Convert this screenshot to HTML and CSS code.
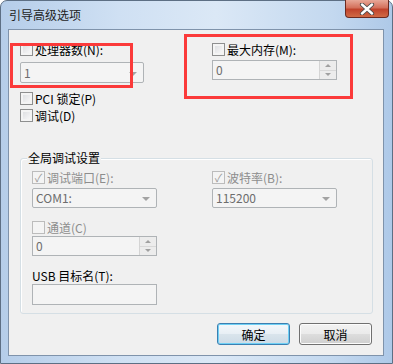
FILE: index.html
```html
<!DOCTYPE html>
<html lang="zh-CN">
<head>
    <meta charset="UTF-8">
    <title>引导高级选项</title>
    <link rel="stylesheet" href="styles.css">
</head>
<body>
    <div class="window">
        <div class="titlebar">
            <span class="title">引导高级选项</span>
            <span class="close">
                <svg width="18" height="12" viewBox="0 0 18 12">
                    <path d="M4 1.5 L14 10.5 M14 1.5 L4 10.5" stroke="#4a4a4a" stroke-width="4.2" stroke-linecap="round"/>
                    <path d="M4 1.5 L14 10.5 M14 1.5 L4 10.5" stroke="#ffffff" stroke-width="2.4" stroke-linecap="round"/>
                </svg>
            </span>
        </div>

        <div class="client">
            <div class="top">
                <div class="col">
                    <div class="check"><span class="box"></span><span>处理器数(N):</span></div>
                    <div class="combo combo-cpu"><span>1</span><span class="arrow"></span></div>
                    <div class="check check-pci"><span class="box"></span><span>PCI 锁定(P)</span></div>
                    <div class="check check-debug"><span class="box"></span><span>调试(D)</span></div>
                </div>
                <div class="col">
                    <div class="check"><span class="box"></span><span>最大内存(M):</span></div>
                    <div class="spin spin-mem">
                        <span class="spin-value">0</span>
                        <span class="spin-btns"><span class="up"></span><span class="down"></span></span>
                    </div>
                </div>
            </div>

            <div class="group">
                <div class="group-title">全局调试设置</div>
                <div class="group-body">
                    <div class="col">
                        <div class="check disabled"><span class="box checked">✓</span><span>调试端口(E):</span></div>
                        <div class="combo combo-port"><span>COM1:</span><span class="arrow"></span></div>
                        <div class="check disabled check-channel"><span class="box"></span><span>通道(C)</span></div>
                        <div class="spin spin-channel">
                            <span class="spin-value">0</span>
                            <span class="spin-btns"><span class="up"></span><span class="down"></span></span>
                        </div>
                        <div class="field-label">USB 目标名(T):</div>
                        <div class="textbox"></div>
                    </div>
                    <div class="col">
                        <div class="check disabled"><span class="box checked">✓</span><span>波特率(B):</span></div>
                        <div class="combo combo-baud"><span>115200</span><span class="arrow"></span></div>
                    </div>
                </div>
            </div>

            <div class="buttons">
                <button class="btn default">确定</button>
                <button class="btn">取消</button>
            </div>
        </div>

        <div class="mark mark-cpu"></div>
        <div class="mark mark-mem"></div>
    </div>
</body>
</html>
```

FILE: styles.css
```css
body {
    margin: 0;
    padding: 0;
    background: #ffffff;
    font-family: "Noto Sans CJK SC", "Liberation Sans", sans-serif;
    font-size: 12px;
    color: #000;
}
.window {
    position: relative;
    width: 393px;
    height: 364px;
    box-sizing: border-box;
    display: flex;
    flex-direction: column;
    padding: 0 8px 7px 7px;
    border: 1px solid #5d6f84;
    border-radius: 7px 7px 0 0;
    background: linear-gradient(90deg, #b5cde9 0%, #cfe0f3 30%, #dbe8f6 55%, #c3d8ef 85%, #aec9e8 100%);
}
.titlebar {
    height: 28px;
    display: flex;
    justify-content: space-between;
    align-items: flex-start;
}
.title {
    margin: 6px 0 0 1px;
    font-size: 12px;
    line-height: 16px;
    color: #1e1e1e;
}
.close {
    width: 44px;
    height: 18px;
    margin: -1px -5px 0 0;
    box-sizing: border-box;
    display: flex;
    align-items: center;
    justify-content: center;
    border: 1px solid #6b2a20;
    border-top: none;
    border-radius: 0 0 4px 4px;
    background: linear-gradient(180deg, #e8a898 0%, #d4715c 45%, #c0432c 55%, #d06a45 100%);
}
/* zone cliente */
.client {
    flex: 1;
    display: flex;
    flex-direction: column;
    background: #f0f0f0;
    border: 1px solid #7f93ab;
}
.top {
    display: grid;
    grid-template-columns: 192px 1fr;
    padding: 13px 0 0 11px;
}
.col {
    display: flex;
    flex-direction: column;
    align-items: flex-start;
}
.check {
    display: flex;
    align-items: center;
    gap: 2px;
    height: 13px;
    line-height: 13px;
    white-space: nowrap;
}
.check.disabled {
    color: #8d8d8d;
}
.box {
    width: 13px;
    height: 13px;
    box-sizing: border-box;
    border: 1px solid #8e8f8f;
    background: linear-gradient(135deg, #d8dadd 0%, #f2f2f3 70%, #fbfbfb 100%);
    box-shadow: inset 0 0 0 2px #f4f4f4;
    font-size: 11px;
    line-height: 11px;
    text-align: center;
    color: #9b9b9b;
}
.disabled .box {
    border-color: #bcbcbc;
    background: #f4f4f4;
    box-shadow: none;
}
.check-pci {
    margin-top: 9px;
}
.check-debug {
    margin-top: 4px;
}
.combo, .spin, .textbox {
    box-sizing: border-box;
    display: flex;
    align-items: center;
    border: 1px solid #afb3b6;
    border-radius: 2px;
    background: #f4f4f4;
    color: #6d6d6d;
    line-height: 14px;
}
.combo {
    justify-content: space-between;
    height: 20px;
    padding: 0 6px 0 3px;
}
.arrow {
    width: 0;
    height: 0;
    border-left: 4px solid transparent;
    border-right: 4px solid transparent;
    border-top: 4px solid #a3a3a3;
    margin-top: 2px;
}
.combo-cpu {
    width: 124px;
    height: 21px;
    margin-top: 6px;
}
.combo-port, .combo-baud {
    width: 125px;
    margin-top: 4px;
}
.spin {
    height: 20px;
    padding-left: 3px;
    border-radius: 0;
}
.spin-value {
    flex: 1;
}
.spin-btns {
    width: 16px;
    height: 18px;
    display: flex;
    flex-direction: column;
    border-left: 1px solid #d4d4d4;
}
.spin-btns span {
    flex: 1;
    display: flex;
    align-items: center;
    justify-content: center;
    background: #ececec;
}
.spin-btns .up {
    border-bottom: 1px solid #d8d8d8;
}
.spin-btns .up::after, .spin-btns .down::after {
    content: '';
    border-left: 3px solid transparent;
    border-right: 3px solid transparent;
}
.spin-btns .up::after {
    border-bottom: 3px solid #a0a0a0;
}
.spin-btns .down::after {
    border-top: 3px solid #a0a0a0;
}
.spin-mem {
    width: 125px;
    margin-top: 4px;
}
/* groupe */
.group {
    margin: 36px 10px 0 11px;
    height: 156px;
    box-sizing: border-box;
    border: 1px solid #d5dfe5;
    border-radius: 3px;
    box-shadow: inset 1px 1px 0 #ffffff;
}
.group-title {
    width: fit-content;
    margin: -7px 0 0 6px;
    padding: 0 1px;
    line-height: 12px;
    background: #f0f0f0;
}
.group-body {
    display: grid;
    grid-template-columns: 180px 1fr;
    padding: 7px 0 0 11px;
}
.check-channel {
    margin-top: 13px;
}
.spin-channel {
    width: 125px;
    margin-top: 2px;
}
.field-label {
    margin-top: 13px;
    line-height: 13px;
    height: 13px;
}
.textbox {
    width: 125px;
    height: 21px;
    margin-top: 2px;
    border-radius: 0;
}
/* boutons */
.buttons {
    display: flex;
    justify-content: flex-end;
    gap: 9px;
    padding: 9px 11px 0 0;
}
.btn {
    width: 73px;
    height: 22px;
    padding: 0;
    font-family: inherit;
    font-size: 12px;
    color: #000;
    border: 1px solid #707070;
    border-radius: 3px;
    background: linear-gradient(180deg, #f2f2f2 0%, #ebebeb 48%, #dddddd 52%, #cfcfcf 100%);
    box-shadow: inset 0 0 0 1px #fcfcfc;
}
.btn.default {
    border-color: #3c7fb1;
    background: linear-gradient(180deg, #f4f8fb 0%, #e8eff5 48%, #d9e4ec 52%, #cddbe6 100%);
    box-shadow: inset 0 0 0 1px #6fd0f5;
}
/* annotations rouges */
.mark {
    position: absolute;
    box-sizing: border-box;
    border: 3px solid #fb3a3a;
}
.mark-cpu {
    left: 9px;
    top: 42px;
    width: 123px;
    height: 45px;
}
.mark-mem {
    left: 183px;
    top: 33px;
    width: 169px;
    height: 65px;
}
```
